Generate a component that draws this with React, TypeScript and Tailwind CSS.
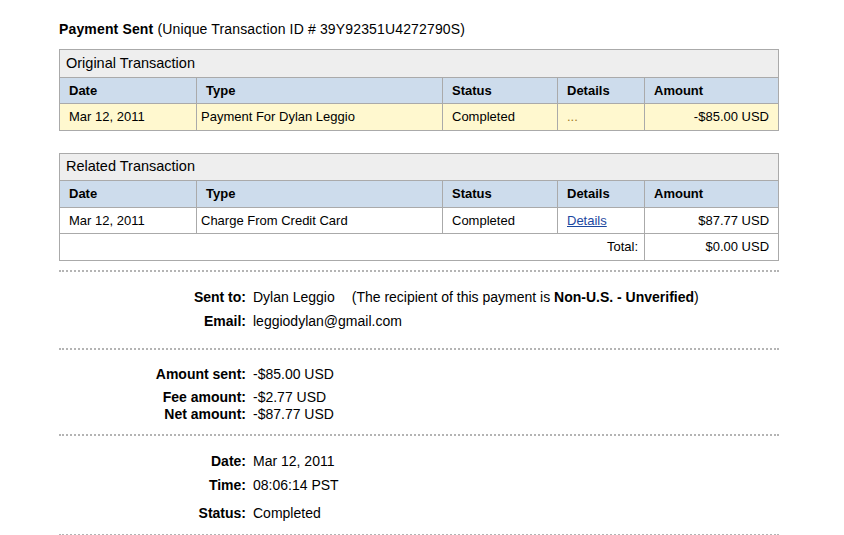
import React from 'react';

type Row = {
  date: string;
  type: string;
  status: string;
  details: React.ReactNode;
  amount: string;
};

const border = 'border border-[#aaaaaa] align-middle';
const cell = `${border} pl-[9px] pr-[9px]`;

function TransactionTable({
  title,
  row,
  highlight,
  total,
  heights,
}: {
  title: string;
  row: Row;
  highlight?: boolean;
  total?: string;
  heights: [string, string, string];
}) {
  return (
    <table className="w-[719px] table-fixed border-collapse text-[13px] text-black">
      <colgroup>
        <col className="w-[137px]" />
        <col className="w-[246px]" />
        <col className="w-[115px]" />
        <col className="w-[87px]" />
        <col className="w-[134px]" />
      </colgroup>
      <tbody>
        <tr className={`${heights[0]} bg-[#eeeeee]`}>
          <td colSpan={5} className={`${border} pl-[6px] text-[14.5px]`}>
            {title}
          </td>
        </tr>
        <tr className={`${heights[1]} bg-[#cddcec] font-bold`}>
          <td className={cell}>Date</td>
          <td className={cell}>Type</td>
          <td className={cell}>Status</td>
          <td className={cell}>Details</td>
          <td className={cell}>Amount</td>
        </tr>
        <tr className={`${heights[2]} ${highlight ? 'bg-[#fff8cf]' : 'bg-white'}`}>
          <td className={cell}>{row.date}</td>
          <td className={`${border} pl-[4px]`}>{row.type}</td>
          <td className={cell}>{row.status}</td>
          <td className={cell}>{row.details}</td>
          <td className={`${cell} text-right`}>{row.amount}</td>
        </tr>
        {total && (
          <tr className="h-[27px]">
            <td colSpan={4} className={`${border} pr-[6px] text-right`}>
              Total:
            </td>
            <td className={`${cell} text-right`}>{total}</td>
          </tr>
        )}
      </tbody>
    </table>
  );
}

function Field({
  label,
  children,
  className = 'h-6 leading-6',
}: {
  label: string;
  children: React.ReactNode;
  className?: string;
}) {
  return (
    <div className={`flex ${className}`}>
      <div className="w-[187px] shrink-0 text-right font-bold">{label}</div>
      <div className="pl-[7px] whitespace-nowrap">{children}</div>
    </div>
  );
}

const Divider = () => <div className="w-[720px] border-t-2 border-dotted border-[#b4b4b4]" />;

export default function App() {
  return (
    <div
      className="min-h-[535px] bg-white pl-[59px] pt-[21px] text-[14px] text-black"
      style={{ fontFamily: '"Liberation Sans", Arial, sans-serif' }}
    >
      <div className="h-[17px] leading-[17px] tracking-[0.15px]">
        <span className="font-bold">Payment Sent</span> (Unique Transaction ID # 39Y92351U4272790S)
      </div>

      <div className="mt-[11px]">
        <TransactionTable
          title="Original Transaction"
          highlight
          heights={['h-[28px]', 'h-[26px]', 'h-[27px]']}
          row={{
            date: 'Mar 12, 2011',
            type: 'Payment For Dylan Leggio',
            status: 'Completed',
            details: <span className="text-[#a07a22]">...</span>,
            amount: '-$85.00 USD',
          }}
        />
      </div>

      <div className="mt-[22px]">
        <TransactionTable
          title="Related Transaction"
          heights={['h-[27px]', 'h-[27px]', 'h-[26px]']}
          row={{
            date: 'Mar 12, 2011',
            type: 'Charge From Credit Card',
            status: 'Completed',
            details: (
              <a href="#" className="text-[#1c48a0] underline">
                Details
              </a>
            ),
            amount: '$87.77 USD',
          }}
          total="$0.00 USD"
        />
      </div>

      <div className="mt-[9px]">
        <Divider />
      </div>

      <div className="pt-[13px] pb-[15px]">
        <Field label="Sent to:">
          Dylan Leggio<span className="ml-[17px]">(The recipient of this payment is </span>
          <span className="font-bold">Non-U.S. - Unverified</span>)
        </Field>
        <Field label="Email:">leggiodylan@gmail.com</Field>
      </div>

      <Divider />

      <div className="pt-[12px] pb-[11px]">
        <Field label="Amount sent:">-$85.00 USD</Field>
        <div className="mt-[3px]">
          <Field label="Fee amount:" className="h-[17px] leading-[17px]">
            -$2.77 USD
          </Field>
          <Field label="Net amount:" className="h-[17px] leading-[17px]">
            -$87.77 USD
          </Field>
        </div>
      </div>

      <Divider />

      <div className="pt-[13px] pb-[9px]">
        <Field label="Date:">Mar 12, 2011</Field>
        <Field label="Time:">08:06:14 PST</Field>
        <div className="mt-[4px]">
          <Field label="Status:">Completed</Field>
        </div>
      </div>

      <Divider />
    </div>
  );
}
